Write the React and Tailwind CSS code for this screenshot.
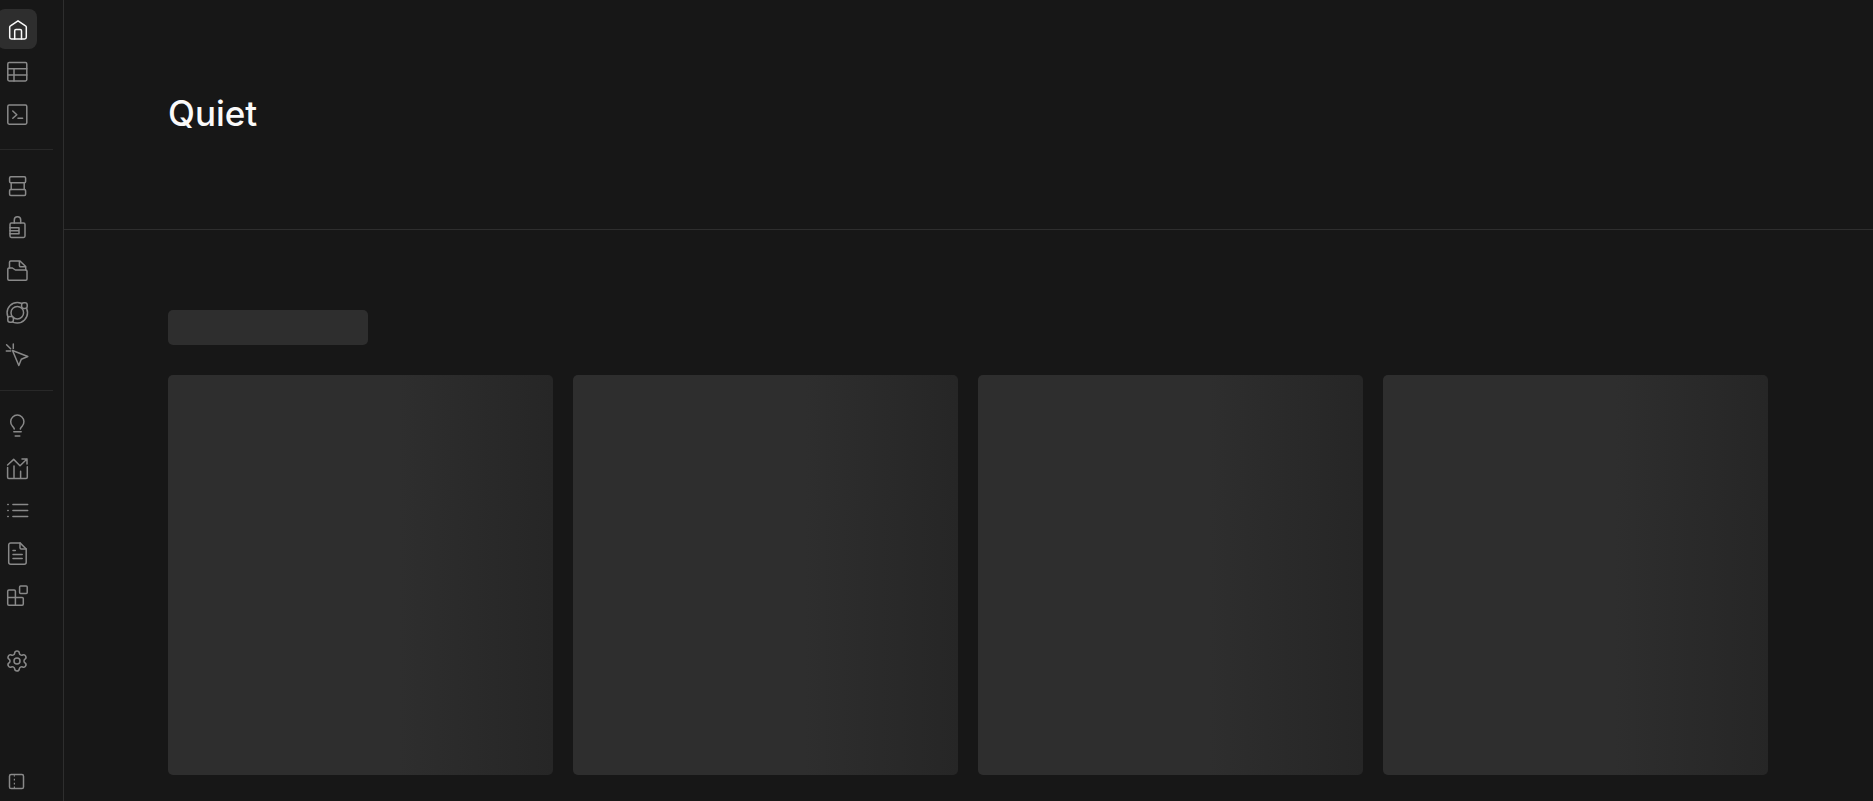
import { Settings } from "lucide-react";
import clsx from "clsx";

const Icon = ({ viewBox = "0 0 24 24", children }) => (
  <svg
    viewBox={viewBox}
    className="w-6 h-6 shrink-0 overflow-visible"
    fill="none"
    stroke="currentColor"
    strokeWidth="1.5"
    strokeLinecap="round"
    strokeLinejoin="round"
    aria-hidden="true"
  >
    {children}
  </svg>
);

const HomeIcon = () => (
  <Icon viewBox="0 -1 24 24">
    <path d="M4.7 9.3a1.6 1.6 0 0 1 .8-1.4L13 2.8l7.5 5.1a1.6 1.6 0 0 1 .8 1.4v10a1.7 1.7 0 0 1-1.7 1.7H6.4a1.7 1.7 0 0 1-1.7-1.7z" />
    <path d="M9.7 21v-8.2a1.3 1.3 0 0 1 1.3-1.3h4.2a1.3 1.3 0 0 1 1.3 1.3V21" />
  </Icon>
);

const TableIcon = () => (
  <Icon viewBox="0 -1 24 24">
    <rect x="2.8" y="2.6" width="19" height="18.4" rx="1.4" />
    <path d="M2.8 8.7h19M2.8 15h19M9 8.7V21" />
  </Icon>
);

const SqlIcon = () => (
  <Icon viewBox="0 -1 24 24">
    <rect x="2.8" y="3" width="19" height="19.2" rx="1.4" />
    <path d="m7.8 9 4 3.7-4 3.6M13 16.2h4.6" />
  </Icon>
);

const DatabaseIcon = () => (
  <Icon>
    <rect x="4.6" y="2.8" width="16" height="6" rx="1.2" />
    <rect x="4.6" y="15.5" width="16" height="6" rx="1.2" />
    <path d="M6.2 8.8v6.7M19.2 8.8v6.7" />
  </Icon>
);

const AuthIcon = () => (
  <Icon>
    <rect x="5" y="7" width="15" height="14.4" rx="1.4" />
    <path d="M9.3 7V4a3.2 3.2 0 0 1 6.4 0v3M5 11.8h9v6H5M5 14.8h9" />
  </Icon>
);

const StorageIcon = () => (
  <Icon>
    <path d="M2.8 11.2A1.2 1.2 0 0 1 4 10h3.4l3 2h10.4a1.2 1.2 0 0 1 1.2 1.2V21a1.2 1.2 0 0 1-1.2 1.2H4A1.2 1.2 0 0 1 2.8 21z" />
    <path d="M4.5 10V4.2A1.2 1.2 0 0 1 5.7 3H15l5.7 5.5V12M14.4 3v4.5a1.2 1.2 0 0 0 1.2 1.2h5" />
  </Icon>
);

const FunctionsIcon = () => (
  <Icon>
    <circle cx="12.3" cy="12.7" r="10.2" />
    <circle cx="12.3" cy="12.7" r="6.3" />
    <rect x="16.6" y="2.8" width="5.6" height="5.6" rx="2.2" fill="#171717" />
    <rect x="2.8" y="16.6" width="5.6" height="5.6" rx="2.2" fill="#171717" />
  </Icon>
);

const RealtimeIcon = () => (
  <Icon>
    <path d="m7.5 8.5 15.3 6-6.5 2.8-2.5 6.2z" />
    <path d="M8.3 2v4.4M1.3 9h4.4M1.6 2.8l4 4" />
  </Icon>
);

const AdvisorsIcon = () => (
  <Icon>
    <path d="M9.3 14c-.3-1.3-1-2-1.9-2.9a6.6 6.6 0 1 1 9.8 0c-.9.9-1.6 1.6-1.9 2.9M8.8 16.8h7.4M10.2 21h4.6" />
  </Icon>
);

const ReportsIcon = () => (
  <Icon>
    <path d="M2.6 8 8.7 2.4l6.3 6.3L22 2M17 2h5v5" />
    <path d="M2.6 10.4v9.8a1.2 1.2 0 0 0 1.2 1.2h17.3a1.2 1.2 0 0 0 1.2-1.2V9.8M9 9v12.4M15.6 14.3v7.1" />
  </Icon>
);

const LogsIcon = () => (
  <Icon>
    <path d="M7.9 5.4h14.8M7.9 11.5h14.8M7.9 17.6h14.8M2.8 5.4h.4M2.8 11.5h.4M2.8 17.6h.4" />
  </Icon>
);

const DocsIcon = () => (
  <Icon>
    <path d="M15 1.9H5.7a2 2 0 0 0-2 2v17.3a2 2 0 0 0 2 2h13.5a2 2 0 0 0 2-2V8z" />
    <path d="M15 1.9v4.9A1.2 1.2 0 0 0 16.2 8h5M8 9.4h2.3M8 13.4h9.2M8 17.4h9.2" />
  </Icon>
);

const IntegrationsIcon = () => (
  <Icon>
    <path d="M10.4 22.2V8.2A1.2 1.2 0 0 0 9.2 7H3.9a1.2 1.2 0 0 0-1.2 1.2V21a1.2 1.2 0 0 0 1.2 1.2h13.2a1.2 1.2 0 0 0 1.2-1.2v-5.4a1.2 1.2 0 0 0-1.2-1.2H2.7" />
    <rect x="14.6" y="3" width="7.6" height="7.4" rx="1" />
  </Icon>
);

const SidebarIcon = () => (
  <Icon>
    <rect x="4.5" y="5.6" width="14" height="14" rx="1.6" />
    <path d="M9.4 6.2v1.4M9.4 9.8v1.6M9.4 13.8v1.6M9.4 17.6V19" strokeWidth="1.2" strokeLinecap="butt" />
  </Icon>
);

const SettingsIcon = () => <Settings className="w-6 h-6 shrink-0" strokeWidth={1.5} />;

const groups = [
  [
    { label: "Home", icon: HomeIcon, active: true },
    { label: "Table Editor", icon: TableIcon },
    { label: "SQL Editor", icon: SqlIcon },
  ],
  [
    { label: "Database", icon: DatabaseIcon },
    { label: "Authentication", icon: AuthIcon },
    { label: "Storage", icon: StorageIcon },
    { label: "Edge Functions", icon: FunctionsIcon },
    { label: "Realtime", icon: RealtimeIcon },
  ],
  [
    { label: "Advisors", icon: AdvisorsIcon },
    { label: "Reports", icon: ReportsIcon },
    { label: "Logs", icon: LogsIcon },
    { label: "API Docs", icon: DocsIcon },
    { label: "Integrations", icon: IntegrationsIcon },
  ],
];

const NavItem = ({ label, icon: ItemIcon, active }) => (
  <a
    href="#"
    aria-label={label}
    aria-current={active ? "page" : undefined}
    className={clsx(
      "w-10 h-10 rounded-lg flex items-center justify-center transition-colors",
      active ? "bg-[#2e2e2e] text-neutral-50" : "text-[#898989] hover:bg-[#242424]"
    )}
  >
    <ItemIcon />
  </a>
);

const Sidebar = () => (
  <aside className="w-16 shrink-0 flex flex-col border-r border-[#2e2e2e] overflow-hidden">
    {/* The rail is tucked slightly under the left edge */}
    <nav className="-ml-[3px] pt-[9px] flex flex-col">
      {groups.map((items, i) => (
        <div
          key={i}
          className={clsx("flex flex-col gap-0.5 pb-4 mr-[10px]", i > 0 && "border-t border-[#282828] pt-4")}
        >
          {items.map((item) => (
            <NavItem key={item.label} {...item} />
          ))}
        </div>
      ))}
      <div className="mt-[10px]">
        <NavItem label="Project Settings" icon={SettingsIcon} />
      </div>
    </nav>
    <button
      type="button"
      aria-label="Toggle sidebar"
      className="mt-auto -ml-[3px] w-10 h-10 flex items-center justify-center text-[#898989]"
    >
      <SidebarIcon />
    </button>
  </aside>
);

const Skeleton = ({ className }) => (
  <div className={clsx("rounded-[5px] bg-[#2e2e2e]", className)} />
);

const App = () => {
  return (
    <div className="min-h-screen flex bg-[#171717] font-['Inter',sans-serif]">
      <Sidebar />
      <main className="flex-1 min-w-0">
        <header className="pl-26 pr-[105px] pt-[93px] pb-24 border-b border-[#2e2e2e]">
          <h1 className="text-[35px] leading-10 font-medium text-neutral-50">Quiet</h1>
        </header>
        <section className="pl-26 pr-[105px] pt-20 pb-6" aria-busy="true">
          <Skeleton className="w-[200px] h-[35px]" />
          <div className="grid grid-cols-4 gap-5 mt-[30px]">
            {[0, 1, 2, 3].map((i) => (
              <Skeleton key={i} className="h-[400px] bg-linear-to-r from-[#2e2e2e] from-60% to-[#262626]" />
            ))}
          </div>
        </section>
      </main>
    </div>
  );
};

export default App;
